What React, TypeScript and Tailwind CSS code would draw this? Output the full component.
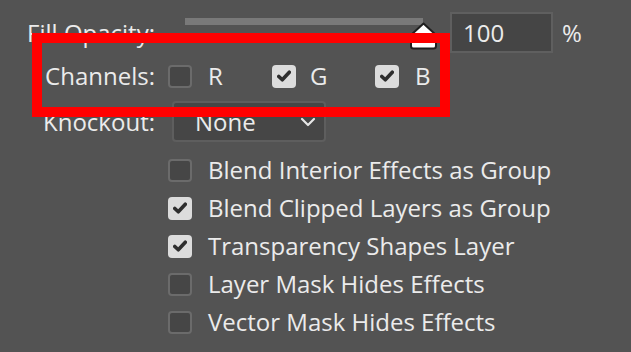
import React from 'react';

const Check = ({ on }: { on: boolean }) =>
  on ? (
    <span className="flex h-[23px] w-[24px] shrink-0 items-center justify-center rounded-[4px] bg-[#dcdcdc]">
      <svg width="14" height="12" viewBox="0 0 14 12">
        <path d="M1.8 6.5 L5.3 9.8 L12.3 2.2" fill="none" stroke="#2e2e2e" strokeWidth="3.6" strokeLinecap="round" strokeLinejoin="round" />
      </svg>
    </span>
  ) : (
    <span className="h-[23px] w-[24px] shrink-0 rounded-[4px] border-2 border-[#6b6b6b] bg-[#464646]" />
  );

const options = [
  { label: 'Blend Interior Effects as Group', on: false },
  { label: 'Blend Clipped Layers as Group', on: true },
  { label: 'Transparency Shapes Layer', on: true },
  { label: 'Layer Mask Hides Effects', on: false },
  { label: 'Vector Mask Hides Effects', on: false },
];

export default function App() {
  return (
    <div
      className="relative h-[352px] w-[631px] overflow-hidden bg-[#535353] pt-[12px] text-[24px] leading-none text-[#ebebeb]"
      style={{ fontFamily: '"Open Sans", "Noto Sans", sans-serif' }}
    >
      {/* Fill Opacity */}
      <div className="flex h-[41px] items-center">
        <div className="w-[155px] text-right">Fill Opacity:</div>
        <div className="relative ml-[30px] h-[41px] w-[238px]">
          <div className="mt-[6px] h-[7px] w-full bg-[#797979]" />
          <svg className="absolute left-[224px] top-[10px]" width="29" height="28" viewBox="0 0 29 28">
            <path d="M14.5 1.5 L27 13 L27 24 Q27 26.5 24.5 26.5 L4.5 26.5 Q2 26.5 2 24 L2 13 Z" fill="#ffffff" stroke="#1f1f1f" strokeWidth="2" strokeLinejoin="round" />
          </svg>
        </div>
        <div className="ml-[27px] flex h-[41px] w-[103px] items-center border-2 border-[#5f5f5f] bg-[#454545] pl-[11px]">100</div>
        <div className="ml-[9px]">%</div>
      </div>

      {/* Channels */}
      <div className="mt-[11px] flex h-[24px] items-center">
        <div className="w-[155px] text-right">Channels:</div>
        <div className="ml-[13px] flex items-center">
          <Check on={false} />
          <span className="ml-[16px] w-[64px]">R</span>
          <Check on={true} />
          <span className="ml-[14px] w-[65px]">G</span>
          <Check on={true} />
          <span className="ml-[16px]">B</span>
        </div>
      </div>

      {/* Knockout */}
      <div className="mt-[13px] flex h-[41px] items-center">
        <div className="w-[155px] text-right">Knockout:</div>
        <div className="ml-[17px] flex h-[41px] w-[154px] items-center justify-between rounded-[4px] border-2 border-[#5e5e5e] bg-[#464646] pl-[21px] pr-[8px]">
          <span>None</span>
          <svg width="16" height="10" viewBox="0 0 16 10">
            <path d="M2 2 L8 8 L14 2" fill="none" stroke="#e6e6e6" strokeWidth="2.2" strokeLinecap="round" strokeLinejoin="round" />
          </svg>
        </div>
      </div>

      {/* Options */}
      <div className="mt-[9px] flex flex-col pl-[168px]">
        {options.map((o) => (
          <div key={o.label} className="flex h-[38px] items-center">
            <Check on={o.on} />
            <span className="ml-[16px]">{o.label}</span>
          </div>
        ))}
      </div>

      {/* annotation */}
      <div className="absolute left-[32px] top-[33px] h-[84px] w-[418px] border-[10px] border-[#ff0000]" />
    </div>
  );
}
